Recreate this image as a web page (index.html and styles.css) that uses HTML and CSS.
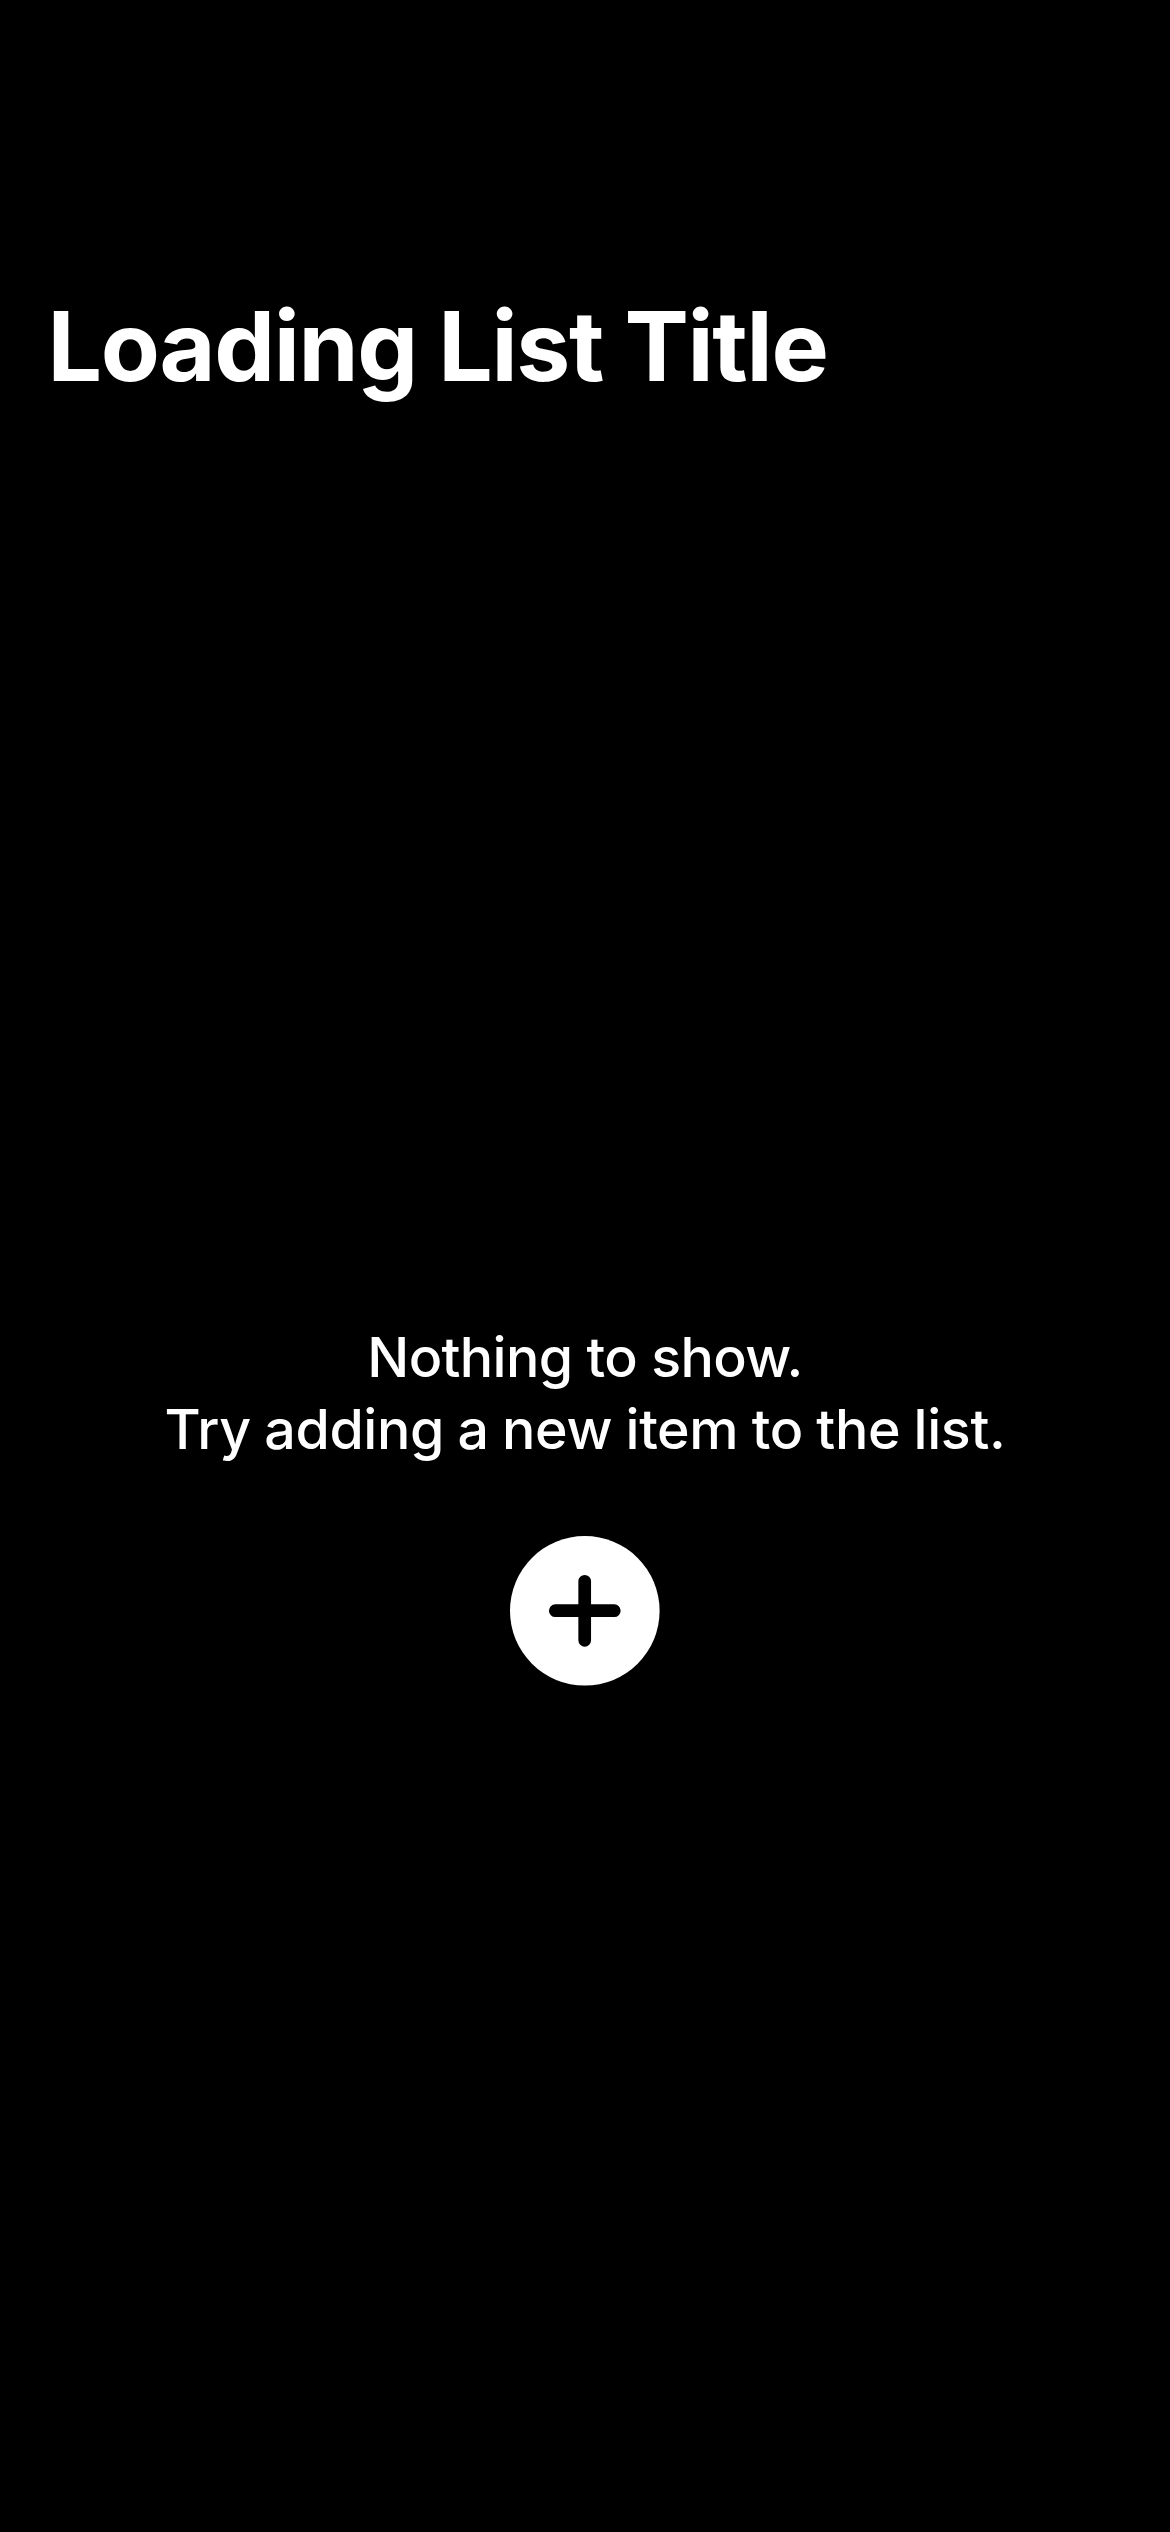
FILE: index.html
```
<!DOCTYPE html>
<html lang="en">
<head>
<meta charset="utf-8">
<title>Loading List Title</title>
<link rel="stylesheet" href="styles.css">
</head>
<body>
<main class="screen">
  <h1 class="title">Loading List Title</h1>
  <section class="empty">
    <p class="message"><span class="line line-first">Nothing to show.</span><span class="line line-second">Try adding a new item to the list.</span></p>
    <button class="add" aria-label="Add item">
      <svg class="add-icon" viewBox="0 0 150 150"><circle cx="74.8" cy="74.8" r="74.8" fill="#fff"/><path d="M74.7 45.3v59M45.3 74.7h59" stroke="#000" stroke-width="12.7" stroke-linecap="round" fill="none"/></svg>
    </button>
  </section>
</main>
</body>
</html>
```

FILE: styles.css
```
body {
  margin: 0;
  background: #000;
}

.screen {
  box-sizing: border-box;
  height: 2532px;
  padding-top: 286px;
  overflow: hidden;
  background: #000;
  color: #fff;
  font-family: Inter, "Liberation Sans", sans-serif;
}

.title {
  margin: 0;
  padding-left: 47.5px;
  font-size: 96.5px;
  font-weight: 700;
  line-height: 120px;
  letter-spacing: -1.35px;
  white-space: nowrap;
}

.empty {
  display: flex;
  flex-direction: column;
  align-items: center;
  margin-top: 915px;
}

.message {
  display: flex;
  flex-direction: column;
  align-items: center;
  margin: 0;
  font-size: 55.5px;
  font-weight: 500;
  line-height: 72px;
  white-space: nowrap;
}

.line-first {
  letter-spacing: -0.65px;
}

.line-second {
  letter-spacing: -0.36px;
  word-spacing: -1px;
}

.add {
  width: 150px;
  height: 150px;
  margin-top: 71px;
  padding: 0;
  border: 0;
  background: none;
}

.add-icon {
  display: block;
  width: 100%;
  height: 100%;
}
```
